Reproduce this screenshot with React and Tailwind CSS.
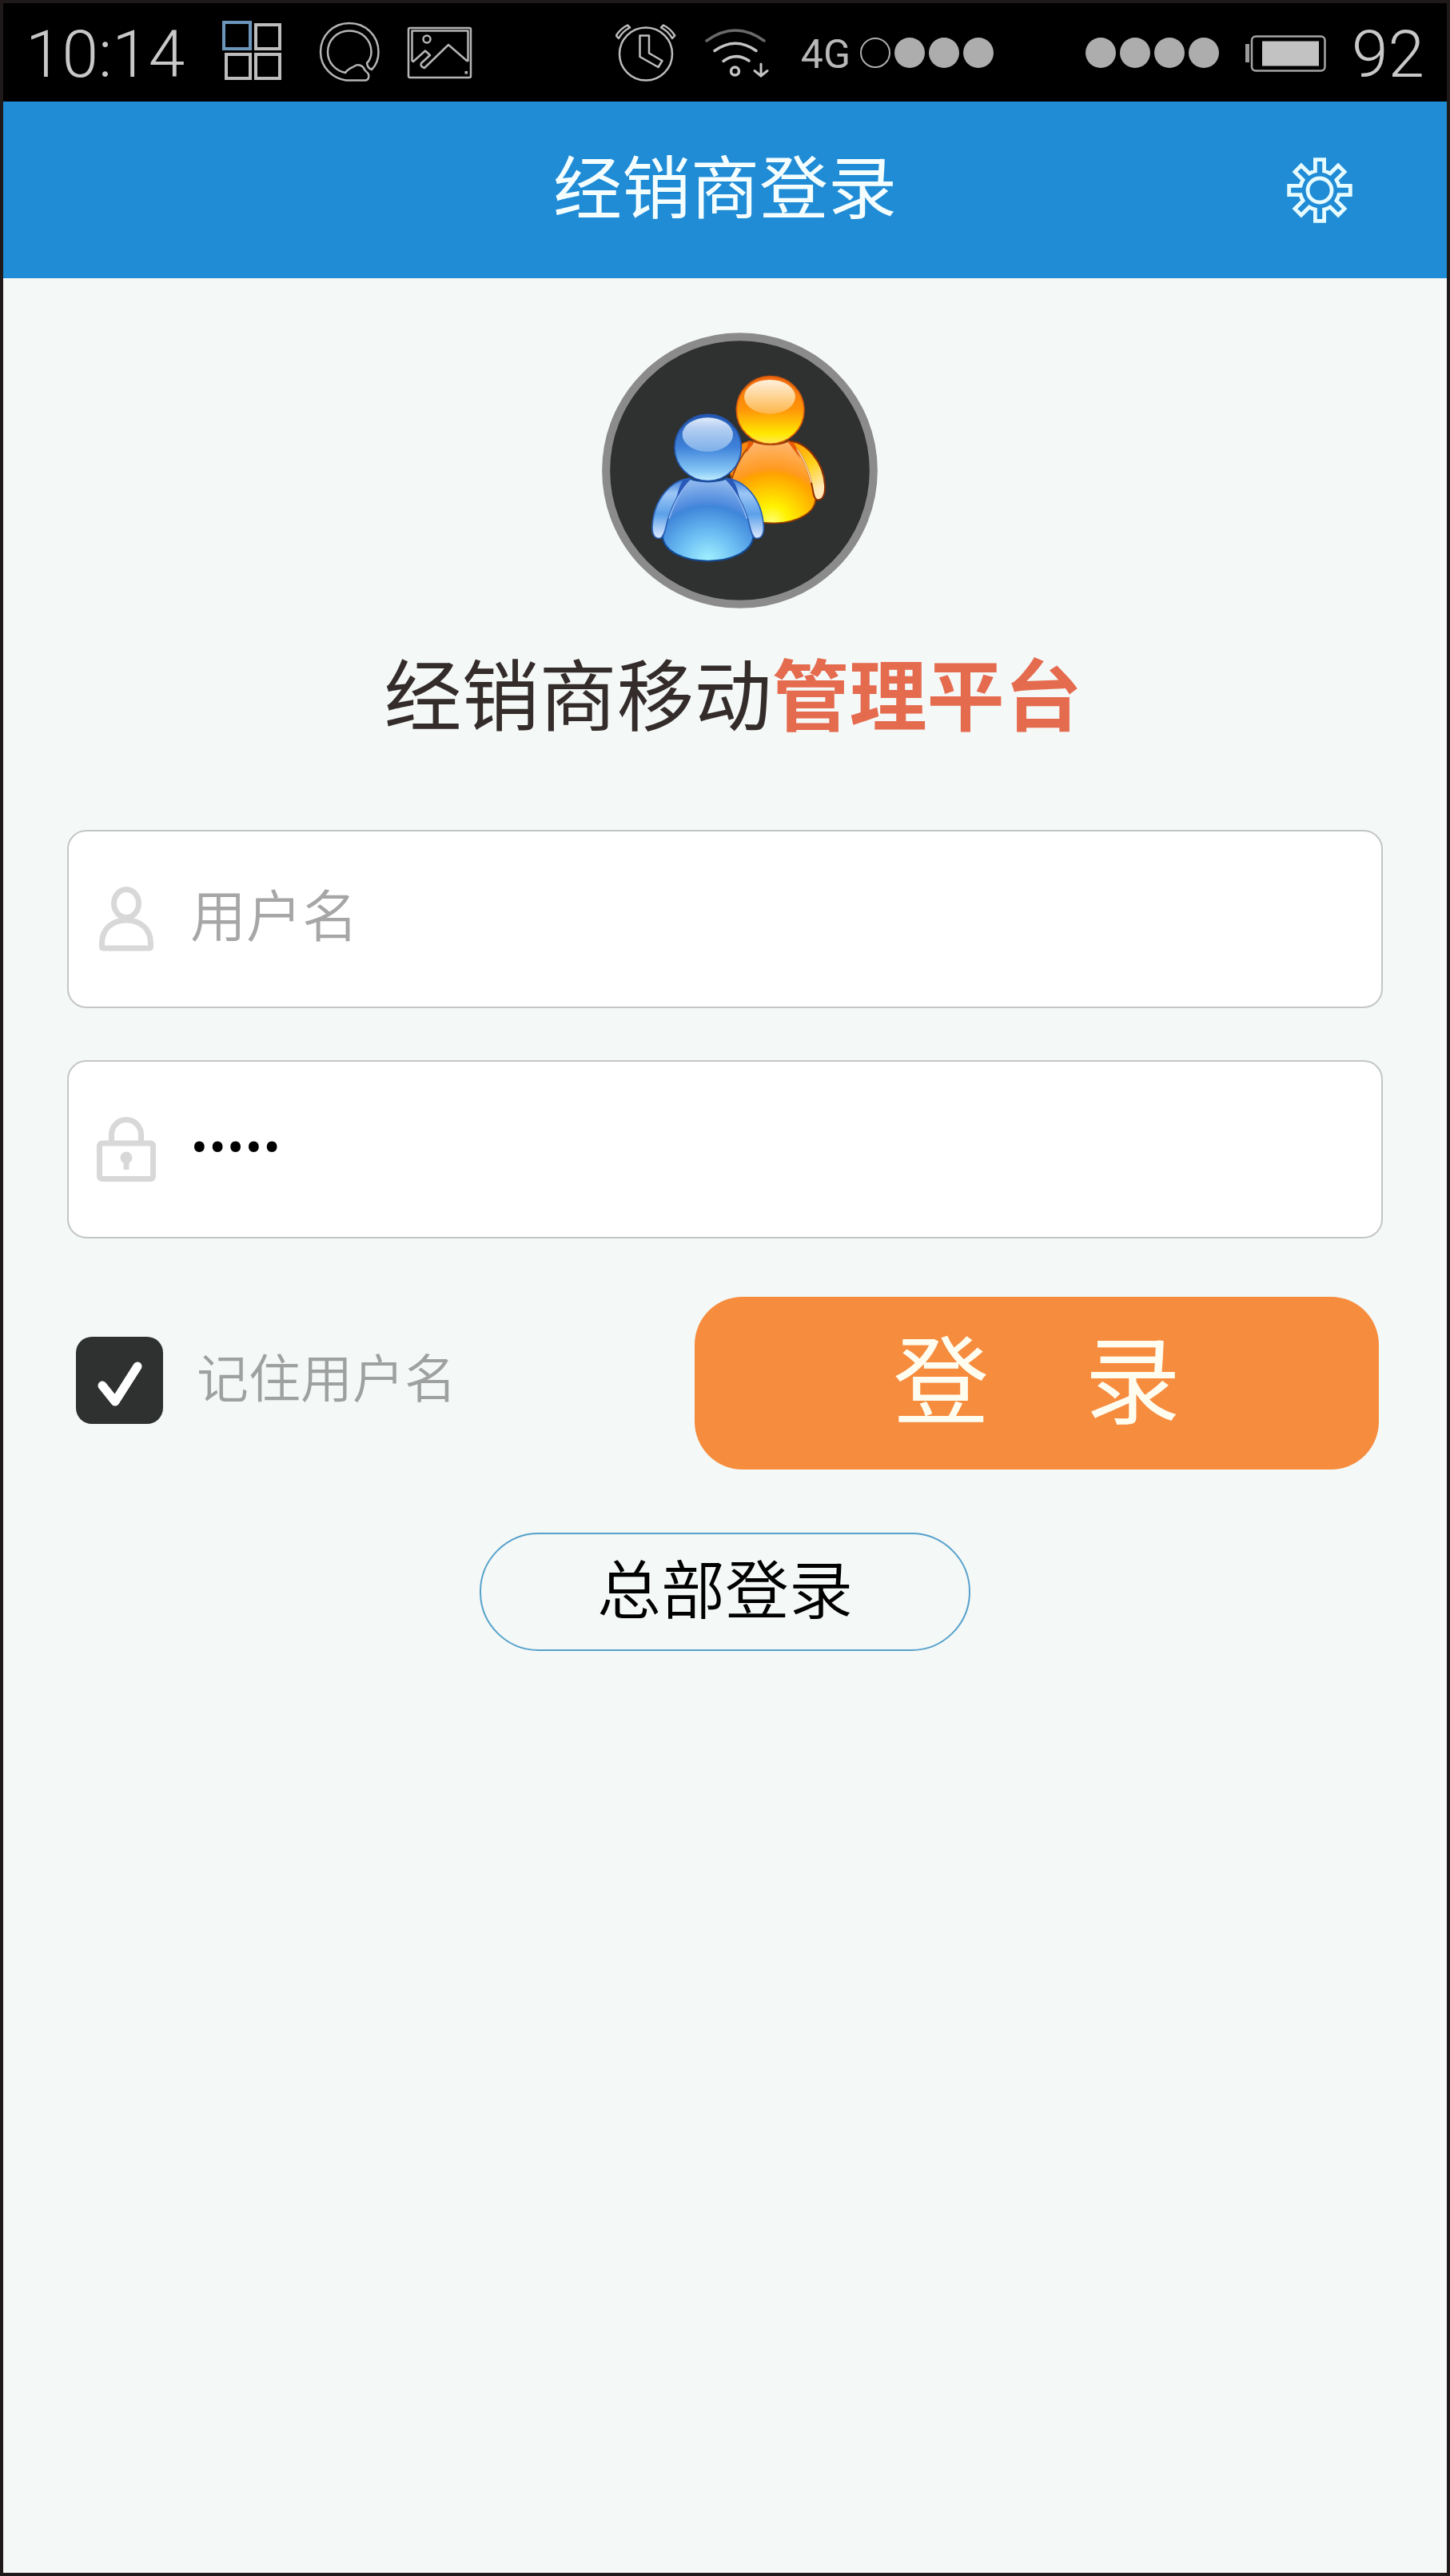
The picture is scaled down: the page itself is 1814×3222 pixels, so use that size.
import { useState } from "react";

const latin = "font-[Roboto,'Noto_Sans_CJK_SC',sans-serif]";

function GridIcon() {
  return (
    <svg className="h-[83px] w-[76px] shrink-0" viewBox="277 26 76 83" fill="none" strokeWidth="4" aria-hidden="true">
      <rect x="280" y="28" width="33" height="33" stroke="#6b95bb" />
      <rect x="320" y="31" width="30" height="30" stroke="#bdbdbd" />
      <rect x="283" y="68" width="30" height="30" stroke="#bdbdbd" />
      <rect x="320" y="68" width="30" height="30" stroke="#bdbdbd" />
    </svg>
  );
}

function SearchRingIcon() {
  return (
    <svg className="h-[83px] w-[76px] shrink-0" viewBox="399 26 76 83" fill="none" stroke="#b5b5b5" strokeWidth="2.500" strokeLinejoin="round" aria-hidden="true">
      <path d="M465 87 C471 81 473.500 73 473.500 65 C473.500 44 457 29 437 29 C417 29 401 44 401 65 C401 85 417 98 433 100.500 H457 C461 100 462 96 461 93 C460 90 456 89 455.500 86 C453 81 447 80 443 83 C439 85 435 86 432 91 C419 88 410 78 410 65 C410 50 422 38.500 437 38.500 C453 38.500 464.500 50 464.500 65 C464.500 70 463 75 459 79 C459.500 83 462 86 465 87 Z" />
    </svg>
  );
}

function PictureIcon() {
  return (
    <svg className="h-[83px] w-[82px] shrink-0" viewBox="508 26 82 83" fill="none" stroke="#b5b5b5" strokeWidth="2.500" strokeLinejoin="round" aria-hidden="true">
      <rect x="510" y="35" width="78" height="62" rx="2" />
      <path d="M516 77 L514.500 76 V38.500 H584.500 V76 L583 76 L560 56 L530 85 Q524 83 526 79 L537 69 L531 63.500 Z" />
      <circle cx="533" cy="49" r="4.500" />
      <rect x="580.500" y="89" width="3.500" height="3.500" fill="#b5b5b5" stroke="none" />
    </svg>
  );
}

function AlarmIcon() {
  return (
    <svg className="h-[83px] w-[76px] shrink-0" viewBox="769 26 76 83" fill="none" stroke="#bdbdbd" strokeWidth="2.500" strokeLinejoin="round" aria-hidden="true">
      <circle cx="807" cy="67.500" r="33" />
      <path d="M799.500 44.500 H811 V66.500 L827.500 76 L822.500 84 L799.500 71 Z" />
      <path d="M784 31.500 L787 34.500 Q778 39 773 48 L769.800 44.500 Q775 36 784 31.500 Z" />
      <path d="M829 31.500 L826 34.500 Q835 39 840 48 L843.200 44.500 Q838 36 829 31.500 Z" />
    </svg>
  );
}

function WifiIcon() {
  return (
    <svg className="h-[83px] w-[80px] shrink-0" viewBox="882 26 80 83" fill="none" stroke="#c4c4c4" strokeWidth="3.500" strokeLinecap="round" aria-hidden="true">
      <path d="M884 51 Q920 25 956 51" stroke="#6a6a6a" />
      <path d="M894 63.500 Q920 45 946 63.500" />
      <path d="M905 76.500 Q920.500 65 937 76" />
      <circle cx="919.500" cy="89" r="5" />
      <path d="M952 80 V94 M944 88.500 L952 95 L960 88.500" strokeWidth="3" />
    </svg>
  );
}

function SignalDots({ filled }) {
  return (
    <div className="flex gap-[5px] pb-1">
      {filled.map((on, i) => (
        <span
          key={i}
          className={
            on
              ? "size-[38px] rounded-full bg-[#adadad]"
              : "size-[38px] rounded-full border-2 border-[#adadad]"
          }
        />
      ))}
    </div>
  );
}

function BatteryIcon() {
  return (
    <svg className="h-[83px] w-[102px] shrink-0" viewBox="1557 26 102 83" aria-hidden="true">
      <rect x="1558" y="55" width="5" height="23" fill="#9a9a9a" />
      <rect x="1566" y="45.500" width="91.500" height="43" rx="5" fill="none" stroke="#a5a5a5" strokeWidth="2.500" />
      <rect x="1579" y="51.500" width="71" height="31" fill="#c2c2c2" />
    </svg>
  );
}

function StatusBar() {
  return (
    <div className={`${latin} flex h-[123px] items-center bg-black pt-1 pl-7 pr-7 text-[82px] leading-none font-light text-[#c8c8c8]`}>
      <span>10:14</span>
      <div className="ml-[46px] flex items-center gap-[46px]">
        <GridIcon />
        <SearchRingIcon />
        <div className="-ml-3">
          <PictureIcon />
        </div>
      </div>
      <div className="ml-auto flex items-center">
        <AlarmIcon />
        <div className="ml-9">
          <WifiIcon />
        </div>
        <span className="ml-10 mr-3 text-[50px] font-normal text-[#b8b8b8]">4G</span>
        <SignalDots filled={[false, true, true, true]} />
      </div>
      <div className="ml-[115px] flex items-center">
        <SignalDots filled={[true, true, true, true]} />
        <div className="ml-8">
          <BatteryIcon />
        </div>
        <span className="ml-8">92</span>
      </div>
    </div>
  );
}

const TEETH = [0, 45, 90, 135, 180, 225, 270, 315];

function gearOutline() {
  const points = TEETH.map((deg) => {
    const a = (deg * Math.PI) / 180;
    return [[-5.6, -24], [-5.6, -38.3], [5.6, -38.3], [5.6, -24]].map(
      ([x, y]) => [x * Math.cos(a) - y * Math.sin(a), x * Math.sin(a) + y * Math.cos(a)]
    );
  });
  return (
    points
      .map(([a, b, c, d], i) => `${i ? "A25 25 0 0 1" : "M"}${a} L${b} L${c} L${d}`)
      .join(" ") + ` A25 25 0 0 1 ${points[0][0]} Z`
  );
}

function GearIcon() {
  return (
    <svg className="size-[82px]" viewBox="-41 -41 82 82" fill="none" stroke="#e6fbff" strokeWidth="4.800" aria-hidden="true">
      <path d={gearOutline()} />
      <circle r="15" />
    </svg>
  );
}

function Logo() {
  return (
    <svg className="size-[345px]" viewBox="40 47 1035 1035" role="img" aria-label="经销商">
      <defs>
        <linearGradient id="oHead" x1="0" y1="0" x2="0" y2="1">
          <stop offset="0" stopColor="#f06a10" />
          <stop offset="0.500" stopColor="#ff9708" />
          <stop offset="0.850" stopColor="#ffe800" />
          <stop offset="1" stopColor="#ffe95a" />
        </linearGradient>
        <linearGradient id="oShine" x1="0" y1="0" x2="0" y2="1">
          <stop offset="0" stopColor="#fff0dc" />
          <stop offset="1" stopColor="#fdb64a" />
        </linearGradient>
        <radialGradient id="oBody" cx="0.500" cy="0.980" r="0.950">
          <stop offset="0" stopColor="#ffff70" />
          <stop offset="0.200" stopColor="#fff200" />
          <stop offset="0.620" stopColor="#ffa200" />
          <stop offset="0.680" stopColor="#ff9a20" />
          <stop offset="1" stopColor="#ffb468" />
        </radialGradient>
        <linearGradient id="oArm" x1="0" y1="0" x2="0.400" y2="1">
          <stop offset="0" stopColor="#ff9a00" />
          <stop offset="0.550" stopColor="#ffd21c" />
          <stop offset="1" stopColor="#ffe9b8" />
        </linearGradient>
        <linearGradient id="bHead" x1="0" y1="0" x2="0" y2="1">
          <stop offset="0" stopColor="#2458b4" />
          <stop offset="0.500" stopColor="#4083da" />
          <stop offset="0.850" stopColor="#86c8f6" />
          <stop offset="1" stopColor="#c5f0ff" />
        </linearGradient>
        <linearGradient id="bShine" x1="0" y1="0" x2="0" y2="1">
          <stop offset="0" stopColor="#dfeafb" />
          <stop offset="0.300" stopColor="#b4cff2" />
          <stop offset="1" stopColor="#7dafe9" />
        </linearGradient>
        <radialGradient id="bBody" cx="0.500" cy="0.980" r="0.950">
          <stop offset="0" stopColor="#a0f0ff" />
          <stop offset="0.350" stopColor="#6bbcf3" />
          <stop offset="0.680" stopColor="#3f86da" />
          <stop offset="0.720" stopColor="#4d8add" />
          <stop offset="1" stopColor="#8db6ee" />
        </radialGradient>
        <linearGradient id="bArm" x1="0" y1="0" x2="0" y2="1">
          <stop offset="0" stopColor="#3a7bd8" />
          <stop offset="0.250" stopColor="#9dc6f5" />
          <stop offset="0.600" stopColor="#5ba0e8" />
          <stop offset="1" stopColor="#dfeaff" />
        </linearGradient>
      </defs>
      <circle cx="557.500" cy="564.500" r="502" fill="#2f3130" stroke="#8a8b8a" strokeWidth="30" />
      <g strokeLinejoin="round">
        <path d="M606 455 C570 455 540 470 510 540 L530 600 C560 560 590 500 606 455 Z" fill="#f78a10" stroke="#c85a00" strokeWidth="5" />
        <path d="M608 455 C560 505 525 580 512 660 C515 735 610 764 690 762 C780 760 840 720 842 672 C828 580 795 495 738 455 C700 472 650 472 608 455 Z" fill="url(#oBody)" stroke="#9a3c00" strokeWidth="5" />
        <path d="M742 455 C805 455 872 530 877 620 C879 655 868 678 847 674 C832 668 834 640 826 610 C808 535 785 490 742 455 Z" fill="url(#oArm)" stroke="#8f2e00" strokeWidth="6" />
        <path d="M742 457 C785 490 808 535 826 610" fill="none" stroke="#ffd9a0" strokeWidth="5" />
        <path d="M590 452 L610 462 L580 500 Z M735 452 L762 462 L785 520 Z" fill="#e85a08" />
        <circle cx="672" cy="338" r="127" fill="url(#oHead)" stroke="#d4580c" strokeWidth="5" />
        <ellipse cx="670" cy="288" rx="96" ry="64" fill="url(#oShine)" />
      </g>
      <g strokeLinejoin="round">
        <path d="M370 595 C325 640 285 730 268 815 C275 870 350 904 438 904 C526 904 600 870 608 815 C591 730 551 640 506 595 C470 610 406 610 370 595 Z" fill="url(#bBody)" stroke="#134a94" strokeWidth="6" />
        <path d="M370 594 C300 600 235 670 229 775 C228 812 243 822 260 818 C278 810 280 770 290 740 C310 680 340 630 370 594 Z" fill="url(#bArm)" stroke="#2a62b8" strokeWidth="5" />
        <path d="M506 594 C576 600 641 670 647 775 C648 812 633 822 616 818 C598 810 596 770 586 740 C566 680 536 630 506 594 Z" fill="url(#bArm)" stroke="#2a62b8" strokeWidth="5" />
        <path d="M346 598 L375 596 L320 668 Q328 625 346 598 Z M530 598 L501 596 L556 668 Q548 625 530 598 Z" fill="#2858b8" />
        <path d="M372 602 C340 635 310 690 292 745 M504 602 C536 635 566 690 584 745" fill="none" stroke="#8fb6ef" strokeWidth="5" />
        <circle cx="438" cy="479" r="125" fill="url(#bHead)" stroke="#2455ae" strokeWidth="5" />
        <ellipse cx="437" cy="430" rx="95" ry="64" fill="url(#bShine)" />
      </g>
    </svg>
  );
}

function PersonIcon() {
  return (
    <svg className="h-[81px] w-[68px]" viewBox="0 0 68 81" fill="none" stroke="#d8d8d8" strokeWidth="7" aria-hidden="true">
      <ellipse cx="34" cy="21" rx="15.500" ry="17.500" />
      <path d="M3.500 75 V71 C3.500 53 16 42 34 42 S64.500 53 64.500 71 V75 Q64.500 77 62 77 H6 Q3.500 77 3.500 75 Z" />
    </svg>
  );
}

function LockIcon() {
  return (
    <svg className="h-[81px] w-[74px]" viewBox="0 0 74 81" fill="none" stroke="#d8d8d8" strokeWidth="7" aria-hidden="true">
      <rect x="3.500" y="33" width="67" height="44.500" rx="3" />
      <path d="M18.500 31 V22 A18.500 18.500 0 0 1 55.500 22 V31" />
      <circle cx="37" cy="51" r="7.500" fill="#d8d8d8" stroke="none" />
      <path d="M37 54 V66" />
    </svg>
  );
}

function Field({ id, label, icon, ...props }) {
  return (
    <div className="flex h-[223px] items-center rounded-[24px] border-2 border-[#c3c6c5] bg-white">
      <label htmlFor={id} className="flex w-[152px] shrink-0 justify-center pr-2" aria-label={label}>
        {icon}
      </label>
      <input
        id={id}
        className={`${latin} min-w-0 flex-1 bg-transparent pb-1 text-[70px] leading-[108px] font-[350] text-black outline-none placeholder:text-[#a6a6a6]`}
        {...props}
      />
    </div>
  );
}

export default function App() {
  const [username, setUsername] = useState("");
  const [password, setPassword] = useState("admin");
  const [remember, setRemember] = useState(true);

  return (
    <div className="flex min-h-screen flex-col border-4 border-[#1f1a19] bg-[#f4f8f7] font-['Noto_Sans_CJK_SC',sans-serif]">
      <StatusBar />
      <header className="grid h-[221px] grid-cols-[1fr_auto_1fr] items-center bg-[#208cd5] px-[118px]">
        <h1 className="col-start-2 pb-4 text-[86px] leading-none text-[#f5feff]">经销商登录</h1>
        <button type="button" aria-label="设置" className="justify-self-end">
          <GearIcon />
        </button>
      </header>

      <main className="px-20">
        <div className="flex flex-col items-center pt-[68px] pl-5">
          <div className="pl-4">
            <Logo />
          </div>
          <p className="mt-[54px] text-[97px] leading-none text-[#332c2b]">
            经销商移动<strong className="font-bold text-[#e56b4f]">管理平台</strong>
          </p>
        </div>

        <form onSubmit={(e) => e.preventDefault()} className="mt-[126px]">
          <div className="flex flex-col gap-[65px]">
            <Field
              id="username"
              label="用户名"
              icon={<PersonIcon />}
              type="text"
              placeholder="用户名"
              value={username}
              onChange={(e) => setUsername(e.target.value)}
            />
            <Field
              id="password"
              label="密码"
              icon={<LockIcon />}
              type="password"
              value={password}
              onChange={(e) => setPassword(e.target.value)}
            />
          </div>

          <div className="mt-[73px] flex items-center justify-between pr-[5px] pl-[11px]">
            <label className="flex items-center gap-[42px] pb-2 text-[65px] leading-none font-[350] text-[#9fa1a0]">
              <span className="grid size-[109px] place-items-center">
                <input
                  type="checkbox"
                  checked={remember}
                  onChange={(e) => setRemember(e.target.checked)}
                  className="peer col-start-1 row-start-1 size-full appearance-none rounded-[20px] bg-[#2f3130]"
                />
                <svg className="pointer-events-none invisible col-start-1 row-start-1 size-full peer-checked:visible" viewBox="0 0 109 109" fill="none" stroke="#fff" strokeWidth="11" strokeLinecap="round" strokeLinejoin="round" aria-hidden="true">
                  <path d="M33 61 L49 81 L77 37" />
                </svg>
              </span>
              <span className="pb-3">记住用户名</span>
            </label>
            <button type="submit" className="h-[216px] w-[52.500%] rounded-[60px] bg-[#f68c3e] pb-5 text-[120px] leading-none text-[#fffdf0]">
              登　录
            </button>
          </div>

          <div className="mt-[79px] flex justify-center">
            <button type="button" className="h-[148px] rounded-full border-2 border-[#56a1cc] px-[145px] pb-4 text-[80px] leading-none font-[350] text-black">
              总部登录
            </button>
          </div>
        </form>
      </main>
    </div>
  );
}
